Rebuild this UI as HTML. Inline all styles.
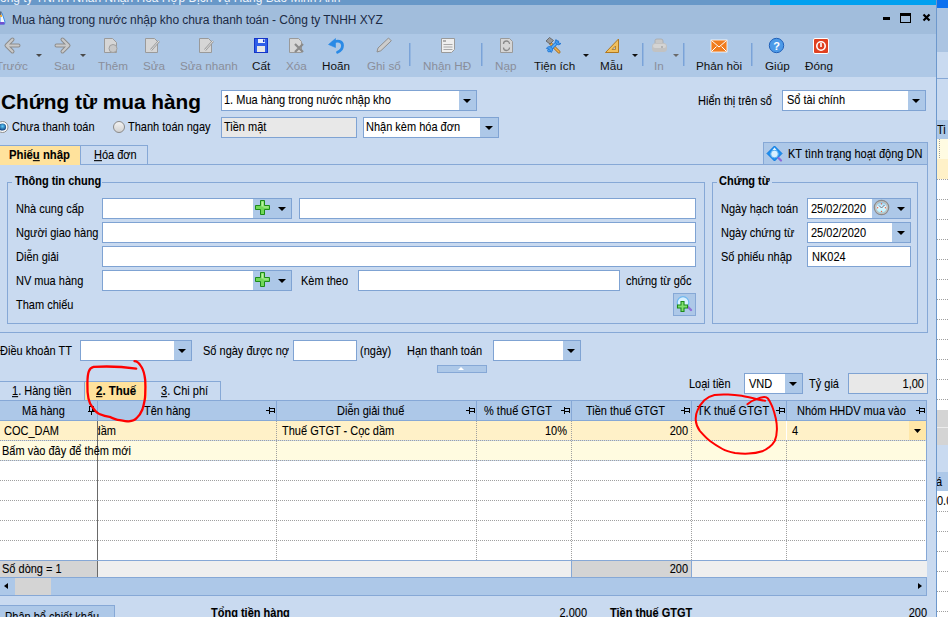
<!DOCTYPE html>
<html><head><meta charset="utf-8">
<style>
*{box-sizing:border-box;margin:0;padding:0}
html,body{width:948px;height:617px;overflow:hidden}
body{position:relative;background:#c9daf0;font-family:"Liberation Sans",sans-serif;font-size:11px;color:#111}
.a{position:absolute}
.t{position:absolute;white-space:nowrap;font-size:11px;line-height:13px;color:#000;-webkit-text-stroke:0.08px #000;transform:scaleY(1.1);transform-origin:0 10px}
.b{font-weight:bold}
.inp{position:absolute;background:#fff;border:1px solid #7fa3d3}
.btn{position:absolute;background:#adc8e8}
.tri{position:absolute;width:0;height:0;border-left:4px solid transparent;border-right:4px solid transparent;border-top:4px solid #000}
.tb{position:absolute;white-space:nowrap;font-size:11.7px;line-height:14px;color:#111;top:59px}
.dis{color:#8a8e9a}
</style></head><body>
<!-- top strip -->
<div class="a" style="left:0;top:0;width:770px;height:5px;background:#6898c8;overflow:hidden"></div>
<div class="a" style="left:770px;top:0;width:167px;height:5px;background:#00a0f0"></div>
<!-- title bar -->
<div class="a" style="left:0;top:5px;width:936px;height:29px;background:#a1bddc"></div>
<div class="t" style="left:0;top:-9px;font-size:12px;line-height:14px;color:#eef4fc;transform:none;-webkit-text-stroke:0">ông ty TNHH Nhân Nhận Hóa Hợp Dịch Vụ Hàng Bảo Minh Anh</div>
<svg class="a" style="left:0;top:11px" width="8" height="14"><path d="M0 1 L2 2 L5 11 L4.5 13 H0z" fill="#f4f8ff" stroke="#3a90e8" stroke-width="1"/><rect x="0" y="0.5" width="1.5" height="3.5" fill="#606878"/><rect x="0" y="4" width="2" height="2" fill="#f0b040"/><rect x="0" y="11" width="4.5" height="2.5" fill="#7050d0"/></svg>
<div class="t" style="left:12px;top:13px;font-size:12px;line-height:14px;color:#1b2a44;letter-spacing:-0.06px;-webkit-text-stroke:0;transform:none">Mua hàng trong nước nhập kho chưa thanh toán - Công ty TNHH XYZ</div>
<div class="a" style="left:883px;top:17px;width:7px;height:3px;background:#000"></div>
<div class="a" style="left:900px;top:13px;width:11px;height:10px;border:1.5px solid #000;border-top-width:3px"></div>
<svg class="a" style="left:922px;top:13px" width="10" height="10"><path d="M1.5 1.5 L7.5 7.5 M7.5 1.5 L1.5 7.5" stroke="#000" stroke-width="2.2"/></svg>
<!-- toolbar -->
<div class="a" style="left:0;top:34px;width:936px;height:43px;background:#aec8e6"></div>

<!-- toolbar icons -->
<svg class="a" style="left:0;top:34px" width="936" height="43" viewBox="0 34 936 43">
 <!-- Truoc arrow left -->
 <path d="M12.5 39.5 L6.5 45.5 L12.5 51.5 M7 45.5 H18.5" fill="none" stroke="#8c8c8c" stroke-width="4" stroke-linecap="round" stroke-linejoin="round"/>
 <path d="M12.5 39.5 L6.5 45.5 L12.5 51.5 M7 45.5 H18.5" fill="none" stroke="#cacaca" stroke-width="2" stroke-linecap="round" stroke-linejoin="round"/>
 <path d="M36 54 h6 l-3 3z" fill="#4a4a4a"/>
 <!-- Sau arrow right -->
 <path d="M62.5 39.5 L68.5 45.5 L62.5 51.5 M68 45.5 H56.5" fill="none" stroke="#8c8c8c" stroke-width="4" stroke-linecap="round" stroke-linejoin="round"/>
 <path d="M62.5 39.5 L68.5 45.5 L62.5 51.5 M68 45.5 H56.5" fill="none" stroke="#cacaca" stroke-width="2" stroke-linecap="round" stroke-linejoin="round"/>
 <path d="M80 54 h6 l-3 3z" fill="#4a4a4a"/>
 <!-- Them doc -->
 <path d="M104.5 38.5 h8 l4 4 v10 h-12z" fill="#d6d6d6" stroke="#9a9a9a"/>
 <circle cx="113" cy="48.5" r="4" fill="#c8c8c8" stroke="#a0a0a0"/>
 <!-- Sua doc -->
 <path d="M145.5 38.5 h9 l3 3 v11 h-12z" fill="#d6d6d6" stroke="#9a9a9a"/>
 <path d="M151 50 l8 -9" stroke="#9a9a9a" stroke-width="2.4"/>
 <path d="M151 50 l8 -9" stroke="#e0e0e0" stroke-width="1"/>
 <!-- Sua nhanh doc -->
 <path d="M199.5 38.5 h9 l3 3 v11 h-12z" fill="#d6d6d6" stroke="#9a9a9a"/>
 <path d="M205 50 l8 -9" stroke="#9a9a9a" stroke-width="2.4"/>
 <path d="M205 50 l8 -9" stroke="#e0e0e0" stroke-width="1"/>
 <!-- Cat floppy -->
 <rect x="254.5" y="38.5" width="13" height="14" fill="#2f5ee8" stroke="#1434c8"/>
 <rect x="258" y="39" width="7" height="4" fill="#e8eefc"/>
 <rect x="263" y="39.5" width="1.5" height="2.5" fill="#1434c8"/>
 <rect x="257" y="46" width="8" height="6" fill="#e6e6e6"/>
 <!-- Xoa doc -->
 <path d="M289.5 38.5 h9 l3 3 v11 h-12z" fill="#d6d6d6" stroke="#9a9a9a"/>
 <path d="M295 44 l8 8 M303 44 l-8 8" stroke="#8a8a8a" stroke-width="2.2"/>
 <!-- Hoan undo -->
 <path d="M333 42.5 C337.5 40 342.5 41 342.5 45.5 C342.5 49.5 340 51.2 337.5 52.3" fill="none" stroke="#2a8ae6" stroke-width="2.8" stroke-linecap="round"/>
 <path d="M328.5 44.5 L335.5 38.5 L335.5 47.5z" fill="#2a8ae6" stroke="#2a8ae6" stroke-width=".6" stroke-linejoin="round"/>
 <!-- Ghi so pencil -->
 <path d="M377 52 l1 -4 l10.5 -10 l2.8 2.8 l-10.5 10z" fill="#cdcdcd" stroke="#8e8e8e"/>
 <!-- separator -->
 <rect x="409" y="43" width="1" height="23" fill="#7aa3d8"/><rect x="410" y="43" width="1" height="23" fill="#94b6e0"/>
 <!-- Nhan HD doc -->
 <path d="M441.5 38.5 h13 v11 l-3 3 h-10z" fill="#eeeeee" stroke="#9a9a9a"/>
 <path d="M443.5 44.5 h9 M443.5 47 h9 M443.5 49.5 h9" stroke="#a8a8a8"/>
 <path d="M443 41 h3" stroke="#707070"/>
 <!-- separator -->
 <rect x="481" y="43" width="1" height="23" fill="#7aa3d8"/><rect x="482" y="43" width="1" height="23" fill="#94b6e0"/>
 <!-- Nap doc -->
 <path d="M500.5 38.5 h9 l3 3 v11 h-12z" fill="#d6d6d6" stroke="#9a9a9a"/>
 <path d="M503.5 44 a3 3 0 0 1 6 0 M509.5 47.5 a3 3 0 0 1 -6 0" fill="none" stroke="#8a8a8a" stroke-width="1.3"/>
 <!-- Tien ich tools -->
 <path d="M550.5 43.5 L559 52" stroke="#a06818" stroke-width="3" stroke-linecap="round"/>
 <path d="M550.5 43.5 L559 52" stroke="#f0b050" stroke-width="1.6" stroke-linecap="round"/>
 <path d="M546 41 L549.5 37.5 L553.5 40.5 L550 44z" fill="#9a9a9a" stroke="#5a5a5a" stroke-width=".8"/>
 <path d="M557.5 42 L549 50.5" stroke="#1a70d0" stroke-width="3.4" stroke-linecap="round"/>
 <path d="M557.5 42 L549 50.5" stroke="#5ab0f8" stroke-width="1.8" stroke-linecap="round"/>
 <path d="M556 39.5 a3.2 3.2 0 1 0 5 4 l-2.2 -0.3 l-1.5 -1.5z" fill="#4aa0f0" stroke="#1a70d0" stroke-width=".8"/>
 <path d="M551 52.5 a3.2 3.2 0 1 0 -4.6 -4 l2.2 0.3 l1.3 1.5z" fill="#4aa0f0" stroke="#1a70d0" stroke-width=".8"/>
 <path d="M583 54 h6 l-3 3z" fill="#111"/>
 <!-- Mau set square -->
 <path d="M605.5 52.5 L618.5 39 V52.5z" fill="#f0c060" stroke="#b07820"/>
 <path d="M612 49.5 L615.5 46 V49.5z" fill="#aec8e6" stroke="#b07820" stroke-width=".8"/>
 <path d="M632 54 h6 l-3 3z" fill="#111"/>
 <rect x="642" y="43" width="1" height="23" fill="#7aa3d8"/><rect x="643" y="43" width="1" height="23" fill="#94b6e0"/>
 <!-- In printer -->
 <path d="M655 44 V40.5 Q655 39 657 39 H661 Q663 39 663 41 V44z" fill="#c8c8c8" stroke="#a8a8a8" stroke-width=".8"/>
 <rect x="652" y="43" width="15" height="9" rx="3.5" fill="#c2c2c2"/>
 <rect x="653" y="44" width="13" height="4" rx="2" fill="#d4d4d4"/>
 <circle cx="662" cy="47" r=".8" fill="#8a8a8a"/>
 <path d="M673 54 h6 l-3 3z" fill="#6a6a6a"/>
 <rect x="683" y="43" width="1" height="23" fill="#7aa3d8"/><rect x="684" y="43" width="1" height="23" fill="#94b6e0"/>
 <!-- Phan hoi envelope -->
 <rect x="711" y="40" width="16" height="12" fill="#f07c1e" stroke="#fff" stroke-width="0.8"/>
 <path d="M711.5 40.5 L719 47 L726.5 40.5 M711.5 51.5 L716.5 46.5 M726.5 51.5 L721.5 46.5" fill="none" stroke="#fff" stroke-width="1"/>
 <rect x="751" y="43" width="1" height="23" fill="#7aa3d8"/><rect x="752" y="43" width="1" height="23" fill="#94b6e0"/>
 <!-- Giup -->
 <circle cx="776.5" cy="45.5" r="7.2" fill="#4c9ae8" stroke="#2060b8"/>
 <text x="776.5" y="50" text-anchor="middle" font-family="Liberation Sans" font-weight="bold" font-size="11" fill="#fff">?</text>
 <!-- Dong -->
 <rect x="813.5" y="38.5" width="15" height="15" rx="1.5" fill="#e04020" stroke="#fff"/>
 <circle cx="821" cy="46" r="4.2" fill="none" stroke="#fff" stroke-width="1.6"/>
 <path d="M821 43 v4" stroke="#fff" stroke-width="1.6"/>
</svg>
<div class="tb dis" style="left:-4px">Trước</div>
<div class="tb dis" style="left:54px">Sau</div>
<div class="tb dis" style="left:98px">Thêm</div>
<div class="tb dis" style="left:143px">Sửa</div>
<div class="tb dis" style="left:180px">Sửa nhanh</div>
<div class="tb" style="left:252px">Cất</div>
<div class="tb dis" style="left:286px">Xóa</div>
<div class="tb" style="left:322px">Hoãn</div>
<div class="tb dis" style="left:367px">Ghi sổ</div>
<div class="tb dis" style="left:423px">Nhận HĐ</div>
<div class="tb dis" style="left:495px">Nạp</div>
<div class="tb" style="left:534px">Tiện ích</div>
<div class="tb" style="left:600px">Mẫu</div>
<div class="tb dis" style="left:654px">In</div>
<div class="tb" style="left:696px">Phản hồi</div>
<div class="tb" style="left:765px">Giúp</div>
<div class="tb" style="left:805px">Đóng</div>


<!-- header -->
<div class="t b" style="left:1px;top:90px;font-size:20.8px;line-height:24px;color:#000;transform:none">Chứng từ mua hàng</div>
<div class="inp" style="left:221px;top:90px;width:256px;height:21px"></div>
<div class="btn" style="left:459px;top:91px;width:17px;height:19px"></div>
<div class="tri" style="left:463px;top:99px"></div>
<div class="t" style="left:224px;top:94px">1. Mua hàng trong nước nhập kho</div>
<div class="t" style="left:698px;top:95px">Hiển thị trên sổ</div>
<div class="inp" style="left:782px;top:90px;width:144px;height:21px"></div>
<div class="btn" style="left:908px;top:91px;width:17px;height:19px"></div>
<div class="tri" style="left:912px;top:99px"></div>
<div class="t" style="left:787px;top:94px">Sổ tài chính</div>
<!-- radios -->
<svg class="a" style="left:0;top:120px" width="130" height="14">
 <defs><radialGradient id="rg" cx="50%" cy="40%" r="60%"><stop offset="0" stop-color="#60d0ff"/><stop offset="1" stop-color="#0a3878"/></radialGradient>
 <linearGradient id="rw" x1="0" y1="0" x2="0" y2="1"><stop offset="0" stop-color="#f4f4f4"/><stop offset="1" stop-color="#d0d0d0"/></linearGradient></defs>
 <circle cx="2.5" cy="7" r="5.5" fill="#fff" stroke="#8a8a8a"/>
 <circle cx="2.5" cy="7" r="3.6" fill="url(#rg)"/>
 <circle cx="119" cy="7" r="5.5" fill="url(#rw)" stroke="#8a8a8a"/>
</svg>
<div class="t" style="left:12px;top:121px">Chưa thanh toán</div>
<div class="t" style="left:128px;top:121px">Thanh toán ngay</div>
<div class="inp" style="left:221px;top:117px;width:136px;height:21px;background:#e8e8e8"></div>
<div class="t" style="left:224px;top:121px">Tiền mặt</div>
<div class="inp" style="left:363px;top:117px;width:136px;height:21px"></div>
<div class="btn" style="left:480px;top:118px;width:18px;height:19px"></div>
<div class="tri" style="left:485px;top:126px"></div>
<div class="t" style="left:366px;top:121px">Nhận kèm hóa đơn</div>
<!-- tabs -->
<div class="a" style="left:0;top:145px;width:80px;height:20px;background:#ffe29c;border-top:1px solid #86a8d6"></div>
<div class="a" style="left:80px;top:145px;width:68px;height:20px;background:#c9daf0;border:1px solid #86a8d6;border-bottom:0"></div>
<div class="t b" style="left:9px;top:149px;font-size:11.3px">Phiế<u>u</u> nhập</div>
<div class="t" style="left:94px;top:149px"><u>H</u>óa đơn</div>
<div class="a" style="left:763px;top:142px;width:165px;height:23px;background:#adc8e8;border:1px solid #86a8d6"></div>
<svg class="a" style="left:766px;top:145px" width="18" height="18">
 <path d="M8.5 1 L16 8.5 L8.5 16 L1 8.5z" fill="#1e90f0" stroke="#0a78e0" stroke-linejoin="round"/>
 <circle cx="8.5" cy="9" r="3.8" fill="#d8f0ff" stroke="#60b0f0"/>
 <path d="M8.5 2.5 L10.5 5 H6.5z" fill="#e8f6ff"/>
 <path d="M12.5 13 L15 15.5" stroke="#8a6ad8" stroke-width="2.2" stroke-linecap="round"/>
</svg>
<div class="t" style="left:788px;top:148px">KT tình trạng hoạt động DN</div>
<!-- panel -->
<div class="a" style="left:0;top:164px;width:928px;height:169px;border-top:1px solid #86a8d6;border-right:1px solid #86a8d6;border-bottom:1px solid #86a8d6"></div>
<div class="a" style="left:0;top:164px;width:80px;height:1px;background:#ffe29c"></div>
<!-- group box 1 -->
<div class="a" style="left:7px;top:182px;width:698px;height:142px;border:1px solid #86a8d6"></div>
<div class="a" style="left:12px;top:176px;width:90px;height:12px;background:#c9daf0"></div>
<div class="t b" style="left:15px;top:175px">Thông tin chung</div>
<div class="t" style="left:16px;top:203px">Nhà cung cấp</div>
<div class="t" style="left:16px;top:227px">Người giao hàng</div>
<div class="t" style="left:16px;top:251px">Diễn giải</div>
<div class="t" style="left:16px;top:275px">NV mua hàng</div>
<div class="t" style="left:16px;top:299px">Tham chiếu</div>
<div class="inp" style="left:102px;top:198px;width:190px;height:21px"></div>
<div class="btn" style="left:253px;top:199px;width:38px;height:19px"></div>
<div class="inp" style="left:299px;top:198px;width:397px;height:21px"></div>
<div class="inp" style="left:102px;top:222px;width:594px;height:21px"></div>
<div class="inp" style="left:102px;top:246px;width:594px;height:21px"></div>
<div class="inp" style="left:102px;top:270px;width:190px;height:21px"></div>
<div class="btn" style="left:253px;top:271px;width:38px;height:19px"></div>
<div class="tri" style="left:278px;top:207px"></div>
<div class="tri" style="left:278px;top:279px"></div>
<svg class="a" style="left:255px;top:200px" width="16" height="16"><path d="M5.5 0.5 h4 v5 h5 v4 h-5 v5 h-4 v-5 h-5 v-4 h5z" fill="#70d858" stroke="#1c8a18"/><path d="M6.5 1.5 h2 v5 h5 v1 h-5 v-1 h-2z" fill="#b8f0a0"/></svg>
<svg class="a" style="left:255px;top:272px" width="16" height="16"><path d="M5.5 0.5 h4 v5 h5 v4 h-5 v5 h-4 v-5 h-5 v-4 h5z" fill="#70d858" stroke="#1c8a18"/><path d="M6.5 1.5 h2 v5 h5 v1 h-5 v-1 h-2z" fill="#b8f0a0"/></svg>
<div class="t" style="left:301px;top:275px">Kèm theo</div>
<div class="inp" style="left:358px;top:270px;width:262px;height:21px"></div>
<div class="t" style="left:626px;top:275px">chứng từ gốc</div>
<div class="a" style="left:673px;top:293px;width:23px;height:23px;background:#adc8e8;border:1px solid #86a8d6"></div>
<svg class="a" style="left:675px;top:295px" width="20" height="20">
 <circle cx="8" cy="7.5" r="5.8" fill="#d8f0ff" stroke="#70b8f0" stroke-width="1.2"/>
 <path d="M12.5 11.5 l3.5 3.5" stroke="#9070d8" stroke-width="2.4" stroke-linecap="round"/>
 <path transform="translate(1.5 1)" d="M4.5 5.5 h3 v3.5 h3.5 v3 h-3.5 v3.5 h-3 v-3.5 h-3.5 v-3 h3.5z" fill="#80e070" stroke="#1c8a18" stroke-width="1.1"/>
</svg>
<!-- group box 2 -->
<div class="a" style="left:712px;top:182px;width:206px;height:142px;border:1px solid #86a8d6"></div>
<div class="a" style="left:717px;top:176px;width:55px;height:12px;background:#c9daf0"></div>
<div class="t b" style="left:719px;top:175px">Chứng từ</div>
<div class="t" style="left:721px;top:203px">Ngày hạch toán</div>
<div class="t" style="left:721px;top:227px">Ngày chứng từ</div>
<div class="t" style="left:721px;top:251px">Số phiếu nhập</div>
<div class="inp" style="left:807px;top:198px;width:104px;height:21px"></div>
<div class="btn" style="left:872px;top:199px;width:38px;height:19px"></div>
<svg class="a" style="left:872px;top:199px" width="19" height="19"><defs><linearGradient id="cf" x1="0" y1="0" x2="0" y2="1"><stop offset="0" stop-color="#7ec8f0"/><stop offset=".45" stop-color="#e8f8ff"/><stop offset="1" stop-color="#a8f0ff"/></linearGradient></defs><circle cx="9.5" cy="8.5" r="7.2" fill="#d0d0d0" stroke="#8a8a8a" stroke-width="1.2"/><circle cx="9.5" cy="8.5" r="5.6" fill="url(#cf)" stroke="#a0a0a0" stroke-width=".6"/><path d="M7 6.5 L9.5 9 L12.5 6" stroke="#607080" stroke-width="1" fill="none"/><circle cx="9.5" cy="4.8" r=".7" fill="#f06040"/><circle cx="9.5" cy="12.5" r=".7" fill="#f06040"/><circle cx="5.6" cy="8.8" r=".7" fill="#f06040"/><circle cx="13.4" cy="8.8" r=".7" fill="#f06040"/></svg>
<div class="tri" style="left:897px;top:207px"></div>
<div class="inp" style="left:807px;top:222px;width:104px;height:21px"></div>
<div class="btn" style="left:892px;top:223px;width:18px;height:19px"></div>
<div class="tri" style="left:897px;top:231px"></div>
<div class="inp" style="left:807px;top:246px;width:104px;height:21px"></div>
<div class="t" style="left:811px;top:203px">25/02/2020</div>
<div class="t" style="left:811px;top:227px">25/02/2020</div>
<div class="t" style="left:812px;top:251px">NK024</div>


<!-- payment row -->
<div class="t" style="left:0;top:345px">Điều khoản TT</div>
<div class="inp" style="left:80px;top:340px;width:112px;height:21px"></div>
<div class="btn" style="left:174px;top:341px;width:17px;height:19px"></div>
<div class="tri" style="left:178px;top:349px"></div>
<div class="t" style="left:203px;top:345px">Số ngày được nợ</div>
<div class="inp" style="left:293px;top:340px;width:64px;height:21px"></div>
<div class="t" style="left:360px;top:345px">(ngày)</div>
<div class="t" style="left:407px;top:345px">Hạn thanh toán</div>
<div class="inp" style="left:493px;top:340px;width:88px;height:21px"></div>
<div class="btn" style="left:563px;top:341px;width:17px;height:19px"></div>
<div class="tri" style="left:567px;top:349px"></div>
<div class="a" style="left:437px;top:365px;width:50px;height:8px;background:#adc8e8;border:1px solid #86a8d6"></div>
<div class="a" style="left:458px;top:367px;width:0;height:0;border-left:3px solid transparent;border-right:3px solid transparent;border-bottom:3px solid #fff"></div>
<!-- detail tabs -->
<div class="a" style="left:0;top:381px;width:85px;height:20px;background:#c9daf0;border:1px solid #86a8d6;border-left:0;border-bottom:0"></div>
<div class="a" style="left:85px;top:381px;width:62px;height:20px;background:#ffe29c;border-top:1px solid #86a8d6"></div>
<div class="a" style="left:147px;top:381px;width:74px;height:20px;background:#c9daf0;border:1px solid #86a8d6;border-left:0;border-bottom:0"></div>
<div class="t" style="left:12px;top:385px"><u>1</u>. Hàng tiền</div>
<div class="t b" style="left:96px;top:385px;font-size:11.5px"><u>2</u>. Thuế</div>
<div class="t" style="left:161px;top:385px"><u>3</u>. Chi phí</div>
<div class="t" style="left:689px;top:378px">Loại tiền</div>
<div class="inp" style="left:744px;top:373px;width:59px;height:21px"></div>
<div class="btn" style="left:785px;top:374px;width:17px;height:19px"></div>
<div class="tri" style="left:789px;top:382px"></div>
<div class="t" style="left:749px;top:378px">VND</div>
<div class="t" style="left:809px;top:378px">Tỷ giá</div>
<div class="inp" style="left:848px;top:373px;width:80px;height:21px;background:#e8e8e8"></div>
<div class="t" style="left:848px;top:378px;width:76px;text-align:right">1,00</div>
<!-- grid -->
<div class="a" style="left:0;top:400px;width:927px;height:21px;background:#adc8e8;border-top:1px solid #86a8d6;border-bottom:1px solid #86a8d6"></div>
<div class="a" style="left:0;top:421px;width:926px;height:19px;background:#fff1c8"></div>
<div class="a" style="left:0;top:441px;width:926px;height:19px;background:#fffbe0"></div>
<div class="a" style="left:0;top:461px;width:926px;height:99px;background:#fff"></div>
<svg class="a" style="left:0;top:400px" width="927" height="178">
 <g stroke="#86a8d6" stroke-width="1">
  <path d="M276.5 1 v19 M476.5 1 v19 M571.5 1 v19 M691.5 1 v19 M786.5 1 v19"/>
 </g>
 <g stroke="#a0a0a0" stroke-width="1" stroke-dasharray="1 1">
  <path d="M0 40.5 H926 M0 60.5 H926 M0 80.5 H926 M0 100.5 H926 M0 120.5 H926 M0 140.5 H926"/>
  <path d="M276.5 21 V160 M476.5 21 V160 M571.5 21 V160 M691.5 21 V160 M786.5 41 V160"/>
 </g>
 <path d="M97.5 1 V20" stroke="#86a8d6"/><path d="M97.5 21 V177" stroke="#6a6a6a"/>
 <path d="M926.5 0 V196" stroke="#86a8d6"/>
 <!-- pins -->
 <g fill="none" stroke="#000" stroke-width="1">
  <path d="M89.5 6.5 h4 v4.5 M89.5 6 v5 M92.5 7 v4 M88 11.5 h7 M91.5 12 v3"/>
 </g>
 <g id="pinh" fill="none" stroke="#000">
  <path d="M266 10.5 h3 M269.5 7 v7 M269.5 8.5 h5.5 M274.5 8 v5 M269.5 11.5 h5.5" stroke-width="1"/>
 </g>
 <use href="#pinh" x="200"/>
 <use href="#pinh" x="295"/>
 <use href="#pinh" x="415"/>
 <use href="#pinh" x="510"/>
 <use href="#pinh" x="650"/>
 <rect x="909" y="21" width="17" height="19" fill="#ffe7a8"/>
 <path d="M914 29 h7 l-3.5 4z" fill="#000"/>
 <path d="M786.5 21 V40" stroke="#fff"/>
</svg>
<div class="t" style="left:22px;top:405px">Mã hàng</div>
<div class="t" style="left:144px;top:405px">Tên hàng</div>
<div class="t" style="left:337px;top:405px">Diễn giải thuế</div>
<div class="t" style="left:484px;top:405px">% thuế GTGT</div>
<div class="t" style="left:586px;top:405px">Tiền thuế GTGT</div>
<div class="t" style="left:697px;top:405px">TK thuế GTGT</div>
<div class="t" style="left:797px;top:405px">Nhóm HHDV mua vào</div>
<div class="t" style="left:4px;top:425px">COC_DAM</div>
<div class="a" style="left:98px;top:421px;width:178px;height:19px;overflow:hidden"><div class="t" style="left:-26px;top:4px">Cọc dầm</div></div>
<div class="t" style="left:282px;top:425px">Thuế GTGT - Cọc dầm</div>
<div class="t" style="left:476px;top:425px;width:91px;text-align:right">10%</div>
<div class="t" style="left:571px;top:425px;width:117px;text-align:right">200</div>
<div class="t" style="left:792px;top:425px">4</div>
<div class="t" style="left:2px;top:445px">Bấm vào đây để thêm mới</div>
<!-- summary -->
<div class="a" style="left:0;top:560px;width:927px;height:18px;background:#efefef;border-top:1px solid #86a8d6;border-bottom:1px solid #86a8d6"></div>
<div class="a" style="left:0;top:561px;width:97px;height:16px;background:#d4d4d4"></div>
<div class="a" style="left:97px;top:561px;width:1px;height:16px;background:#6a6a6a"></div>
<div class="a" style="left:571px;top:561px;width:121px;height:16px;background:#d4d4d4;border-left:1px solid #86a8d6;border-right:1px solid #86a8d6"></div>
<div class="t" style="left:2px;top:563px">Số dòng = 1</div>
<div class="t" style="left:571px;top:563px;width:117px;text-align:right">200</div>
<!-- scrollbar -->
<div class="a" style="left:0;top:578px;width:927px;height:18px;background:#adc8e8;border-bottom:1px solid #86a8d6;border-right:1px solid #86a8d6"></div>
<div class="a" style="left:15px;top:578px;width:36px;height:17px;background:#d4d4d4"></div>
<div class="a" style="left:4px;top:583px;width:0;height:0;border-top:3.5px solid transparent;border-bottom:3.5px solid transparent;border-right:4px solid #000"></div>
<div class="a" style="left:918px;top:583px;width:0;height:0;border-top:3.5px solid transparent;border-bottom:3.5px solid transparent;border-left:4px solid #000"></div>
<!-- footer -->
<div class="a" style="left:-2px;top:605px;width:117px;height:20px;background:#adc8e8;border:1px solid #86a8d6"></div>
<div class="t" style="left:5px;top:611px">Phân bổ chiết khấu</div>
<div class="t b" style="left:211px;top:607px">Tổng tiền hàng</div>
<div class="t" style="left:500px;top:607px;width:87px;text-align:right">2.000</div>
<div class="t b" style="left:610px;top:607px">Tiền thuế GTGT</div>
<div class="t" style="left:840px;top:607px;width:87px;text-align:right">200</div>
<!-- red annotations -->
<svg class="a" style="left:0;top:0" width="948" height="617">
 <path d="M136.2 368.6 C125 367 108 366 93.6 366.9 C89 368 87.5 372 87.4 383.4 C87.2 392 87.5 402 92.5 407.2 C95 411 98 413.5 99.3 414 C104 416 106 416.5 109.5 416.8 C114 419 117 420 119.7 420.2 C124 421 127 421.5 128.8 421.4 C132 421 135 420 136.7 418 C139 416 141 413 142.4 409.5 C144 404 145.2 399 145.2 394.7 C145.5 389 145.5 385 145.2 380 C144.5 374 143 369.5 141.8 367.5 C140 364.5 139 363 137.9 362.4 C136.5 361.5 135.5 361.2 134.5 361.2" fill="none" stroke="#ff0000" stroke-width="2.3" stroke-linecap="round"/>
 <path d="M747.4 404.2 C750 402 752 400.5 755.4 399.6 C759 398 762 397 764.5 397 C766 397 767 397.5 767.9 398.5 C770 401 771 404 772.4 407 C774 411 775 415 775.8 418.4 C776.6 422 777 426 776.9 429.7 C776.8 434 776 438 774.7 441 C773 444 771 446 769 447.3 C767 449 764.5 450.5 762.2 451.3 C757 453 752 453.5 748.6 453.6 C744 454 739 453.5 735 453 C730 452 726 451 722.5 449 C718 446.5 714 444 710 441 C706 438 703 434.5 699.8 430.9 C697.5 427.5 696 424 695.8 420.6 C695.5 417 696 413.5 697.5 410.4 C699 406.5 701.5 403 704.3 400.2 C707 398 710.5 396 714.5 395.1 C719 394.3 724 394.3 728.1 394.5 C733 394.7 737 395.1 741.7 395.7 C746 396.5 750 397.5 754.2 398.5 C758 399.5 762 400.3 765 400.8" fill="none" stroke="#ff0000" stroke-width="2.0" stroke-linecap="round"/>
</svg>

<!-- right edge -->
<div class="a" style="left:936px;top:0;width:1px;height:617px;background:#6d98cc"></div>
<div class="a" style="left:937px;top:0;width:11px;height:617px;background:#fff;overflow:hidden">
 <div class="a" style="left:0;top:0;width:11px;height:8px;background:#0a70f0"></div>
 <div class="a" style="left:0;top:8px;width:11px;height:44px;background:#abc4e2"></div>
 <div class="a" style="left:0;top:52px;width:11px;height:26px;background:#c9daf0"></div>
 <div class="a" style="left:0;top:78px;width:11px;height:1px;background:#86a8d6"></div>
 <div class="a" style="left:0;top:79px;width:11px;height:41px;background:#c9daf0"></div>
 <div class="a" style="left:0;top:120px;width:11px;height:19px;background:#adc8e8"></div>
 <div class="t" style="left:0;top:124px">Ti</div>
 <div class="a" style="left:0;top:139px;width:11px;height:20px;background:#fffbe2"></div>
 <div class="a" style="left:0;top:159px;width:11px;height:20px;background:#fff1c8"></div>
 <div class="a" style="left:0;top:410px;width:11px;height:35px;background:#d4d4d4"></div>
 <div class="a" style="left:0;top:427px;width:11px;height:1px;background:#ececec"></div>
 <div class="a" style="left:0;top:445px;width:11px;height:27px;background:#c9daf0"></div>
 <div class="a" style="left:0;top:472px;width:11px;height:19px;background:#adc8e8"></div>
 <div class="t" style="left:-34px;top:476px">Đơn giá</div>
 <div class="t" style="left:0;top:495px">0.0</div>
 <svg class="a" style="left:0;top:0" width="11" height="617"><g stroke="#a0a0a0" stroke-dasharray="1 1">
  <path d="M2.5 139 V159 M0 179.5 H11 M0 199.5 H11 M0 219.5 H11 M0 239.5 H11 M0 259.5 H11 M0 279.5 H11 M0 299.5 H11 M0 319.5 H11 M0 339.5 H11 M0 359.5 H11 M0 379.5 H11 M0 399.5 H11 M0 511.5 H11 M0 531.5 H11 M0 551.5 H11 M0 571.5 H11 M0 591.5 H11 M0 611.5 H11"/>
 </g></svg>
</div>
</body></html>
